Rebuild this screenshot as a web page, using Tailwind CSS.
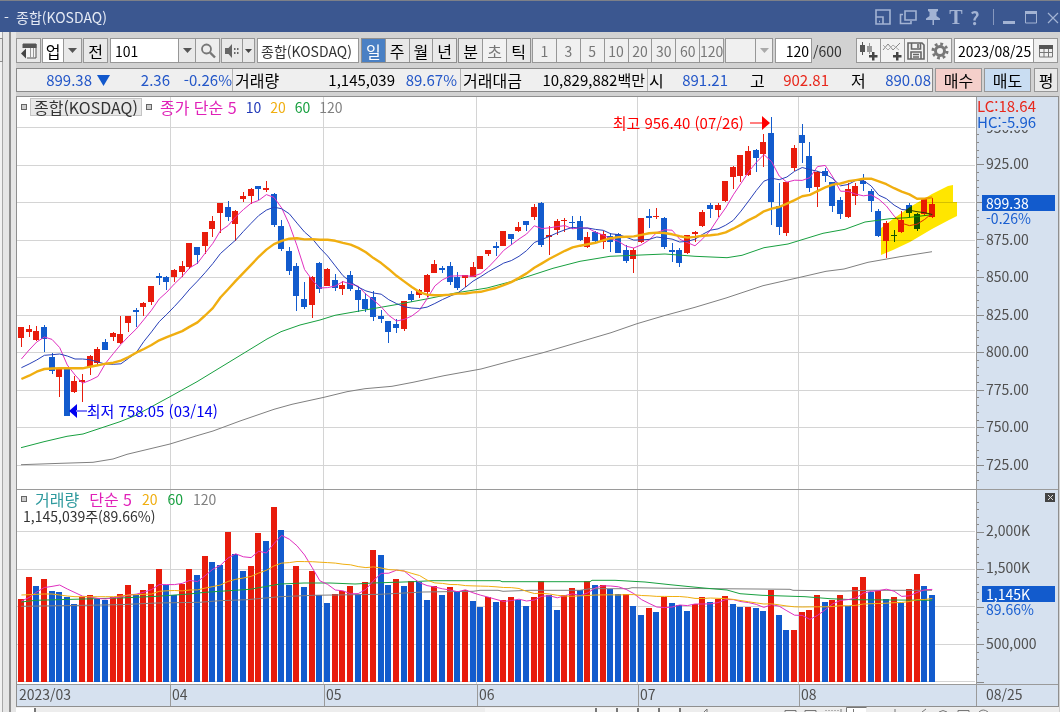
<!DOCTYPE html>
<html lang="ko">
<head>
<meta charset="utf-8">
<title>종합(KOSDAQ)</title>
<script src="https://cdn.jsdelivr.net/npm/@tailwindcss/browser@4"></script>
</head>
<body class="flex h-screen flex-col overflow-hidden bg-[#d2d2d2] font-['Noto_Sans_CJK_KR',sans-serif] text-sm leading-4 text-black">

<header class="flex h-8 shrink-0 items-center border-t border-[#7d8088] bg-[#3b5790] pl-1 text-[#e4e9f4]">
  <span class="w-3">-</span>
  <h1>종합(KOSDAQ)</h1>
  <div class="ml-auto flex items-center text-[#a3b3d3]">
    <button class="mr-2 w-4" aria-label="창 축소"><svg class="size-4" viewBox="0 0 16 16" fill="none" stroke="currentColor" stroke-width="1.6"><path d="M1 1h14v14H1z"/><path d="M1 8h7v7"/><path d="M4 12.500h1"/></svg></button>
    <button class="mr-2 w-4.5" aria-label="창 복제"><svg class="h-4 w-4.5" viewBox="0 0 18 16" fill="none" stroke="currentColor" stroke-width="1.6"><path d="M6 2h11v9H6z"/><path d="M4 5.500H1.500V14.500H12V12"/></svg></button>
    <button class="mr-2 w-4" aria-label="고정"><svg class="h-[18px] w-4" viewBox="0 0 16 18" fill="currentColor"><path d="M3 1h10v2l-1.500 1v4l3.500 2.500V12H9v5H7.500v-5H1v-1.500L4.500 8V4L3 3z"/></svg></button>
    <button class="mr-1.5 w-3.5 font-['Liberation_Serif',serif] text-xl leading-5 font-bold" aria-label="글꼴">T</button>
    <button class="mr-3 w-3 text-lg leading-5 font-bold" aria-label="도움말">?</button>
    <span class="mr-2 h-4 w-px bg-[#8698be]"></span>
    <button class="mr-2 w-3.5" aria-label="최소화"><svg class="h-4 w-3.5" viewBox="0 0 14 16" fill="currentColor"><path d="M1 12h12v3H1z"/></svg></button>
    <button class="mr-2 w-3.5" aria-label="최대화"><svg class="h-4 w-3.5" viewBox="0 0 14 16" fill="none" stroke="currentColor"><path d="M1.500 4v10h11V4"/><path d="M1 3.500h12" stroke-width="3"/></svg></button>
    <button class="w-3.5" aria-label="닫기"><svg class="h-4 w-3.5" viewBox="0 0 14 16" fill="none" stroke="currentColor" stroke-width="1.200"><path d="M2 4l10 10M12 4L2 14"/></svg></button>
  </div>
</header>

<div class="flex min-h-0 grow">
  <aside class="flex w-4 shrink-0 bg-[#e6e6e6]">
    <div class="w-[3px] border-r border-[#a8a8a8] bg-[#f2f2f2] pt-1.5"><div class="h-6 w-[3px] border-y border-r border-[#8c8c8c] bg-[#e8e8e8]"></div></div>
    <div class="mr-[5px] ml-auto w-0.5 bg-[#909090]"></div>
  </aside>

  <main class="flex min-w-0 grow flex-col pr-px">
    <div class="flex h-[31px] shrink-0 pt-1.5 pr-px">
      <button class="grid w-[25px] place-items-center border border-[#979797] bg-[#e9e9e9]" aria-label="화면 접기"><svg class="size-4" viewBox="0 0 16 16"><path d="M2 1h13v14H6" fill="#f4f4f4" stroke="#555"/><path d="M1.500 1h14v4h-14z" fill="#555"/><path d="M9.500 5v10M12.500 5v10" stroke="#999"/><path d="M0 10.500l5-5v10z" fill="#444"/></svg></button>
      <span class="ml-px grid w-[22px] place-items-center border border-[#979797] bg-white text-base">업</span>
      <button class="grid w-[18px] place-items-center border-y border-r border-[#979797] bg-[#e9e9e9]" aria-label="업종 목록"><svg class="h-[5px] w-[9px]" viewBox="0 0 9 5"><path d="M0 0h9L4.500 5z" fill="#555"/></svg></button>
      <button class="ml-px w-[25px] border border-[#979797] bg-[#e9e9e9] text-base leading-4">전</button>
      <input class="ml-0.5 w-[69px] border border-[#979797] bg-white pl-1" value="101" aria-label="종목코드">
      <button class="grid w-[17px] place-items-center border-y border-r border-[#979797] bg-[#e9e9e9]" aria-label="종목 목록"><svg class="h-[5px] w-[9px]" viewBox="0 0 9 5"><path d="M0 0h9L4.500 5z" fill="#555"/></svg></button>
      <button class="grid w-6 place-items-center border-y border-r border-[#979797] bg-[#ededed]" aria-label="검색"><svg class="size-4" viewBox="0 0 16 16" fill="none" stroke="#777"><circle cx="6.500" cy="6" r="4.500" stroke-width="1.800"/><path d="M10 9.500l5 5" stroke-width="2.400"/></svg></button>
      <button class="ml-px grid w-[22px] place-items-center border border-[#979797] bg-[#e9e9e9]" aria-label="소리"><svg class="size-4" viewBox="0 0 16 16" fill="#666"><path d="M1 5h3.500L8 1v14l-3.500-4H1z"/><path d="M10 5h1.500v2H10zM13 5h1.500v2H13zM10 9h1.500v2H10zM13 9h1.500v2H13z"/></svg></button>
      <button class="grid w-3 place-items-center border-y border-r border-[#979797] bg-[#e9e9e9]" aria-label="소리 옵션"><svg class="h-1 w-[7px]" viewBox="0 0 7 4"><path d="M0 0h7L3.500 4z" fill="#444"/></svg></button>
      <input class="ml-0.5 w-[102px] border border-[#979797] bg-white pl-[3px] text-[#333]" value="종합(KOSDAQ)" aria-label="종목명">

      <div class="ml-0.5 flex w-24 border border-[#8f8f8f] text-base leading-4">
        <button class="grow basis-0 bg-[#4a80c4] text-white">일</button>
        <button class="grow basis-0 border-l border-[#979797] bg-[#e9e9e9]">주</button>
        <button class="grow basis-0 border-l border-[#979797] bg-[#e9e9e9]">월</button>
        <button class="grow basis-0 border-l border-[#979797] bg-[#e9e9e9]">년</button>
      </div>
      <div class="ml-px flex w-[73px] border border-[#8f8f8f] text-base leading-4">
        <button class="grow basis-0 bg-[#e9e9e9]">분</button>
        <button class="grow basis-0 border-l border-[#979797] bg-[#f2f2f2] text-[#777]">초</button>
        <button class="grow basis-0 border-l border-[#979797] bg-[#e9e9e9]">틱</button>
      </div>
      <div class="ml-px flex w-48 border border-[#979797] bg-[#f0f0f0] text-[#777]">
        <button class="w-0 grow">1</button>
        <button class="w-0 grow border-l border-[#979797]">3</button>
        <button class="w-0 grow border-l border-[#979797]">5</button>
        <button class="w-0 grow border-l border-[#979797]">10</button>
        <button class="w-0 grow border-l border-[#979797]">20</button>
        <button class="w-0 grow border-l border-[#979797]">30</button>
        <button class="w-0 grow border-l border-[#979797]">60</button>
        <button class="flex w-0 grow justify-center border-l border-[#979797]"><span class="self-center">120</span></button>
      </div>
      <div class="relative ml-px flex w-12">
        <select class="w-full appearance-none border border-[#979797] bg-[#f0f0f0]" aria-label="분틱 간격" disabled><option></option></select>
        <span class="pointer-events-none absolute inset-y-0 right-0 grid w-[18px] place-items-center border border-[#979797]"><svg class="h-[5px] w-[9px]" viewBox="0 0 9 5"><path d="M0 0h9L4.500 5z" fill="#aaa"/></svg></span>
      </div>
      <input class="ml-0.5 w-[37px] border border-[#979797] bg-white pr-0.5 text-right" value="120" aria-label="표시 개수">
      <span class="ml-px self-center text-[#333]">/600</span>

      <div class="ml-auto flex w-24 border border-[#979797] bg-[#f2f2f2]">
        <button class="grid w-0 grow place-items-center border-r border-[#979797]" aria-label="캔들 추가"><svg class="size-5" viewBox="0 0 20 20"><path d="M2 4h5v7H2zM4 1h1v13H4z" fill="#555"/><path d="M9 5h5v6H9zM11 2h1v11h-1z" fill="#999"/><path d="M14 11h2.500v3h3v2.500h-3v3H14v-3h-3V14h3z" fill="#444"/></svg></button>
        <button class="grid w-0 grow place-items-center border-r border-[#979797]" aria-label="지표 추가"><svg class="size-5" viewBox="0 0 20 20" fill="none"><path d="M1 9l5-6 5 6 7-7" stroke="#888"/><path d="M1 4l5 5 5-5 6 5" stroke="#aaa"/><path d="M14 11h2.500v3h3v2.500h-3v3H14v-3h-3V14h3z" fill="#444"/></svg></button>
        <button class="grid w-0 grow place-items-center border-r border-[#979797]" aria-label="저장"><svg class="size-[18px]" viewBox="0 0 18 18" fill="none" stroke="#666" stroke-width="1.600"><path d="M1 1h14l2 2v14H1z"/><path d="M4.500 1v6h9V1M11 2v4M4 17v-7h10v7M6 12.500h6M6 15h6"/></svg></button>
        <button class="grid w-0 grow place-items-center" aria-label="설정"><svg class="size-[18px]" viewBox="-9 -9 18 18" fill="none" stroke="#777"><circle r="4.500" stroke-width="3"/><circle r="7" stroke-width="3" stroke-dasharray="2.750 2.750"/></svg></button>
      </div>
      <div class="ml-0.5 flex border border-[#979797] bg-white">
        <input class="w-[78px] pl-[3px]" value="2023/08/25" aria-label="날짜">
        <button class="grid w-6 place-items-center border-l border-[#979797] bg-[#f0f0f0]" aria-label="달력"><svg class="size-4" viewBox="0 0 16 16"><path d="M1.500 3h13v11h-13zM1.500 9.500h13M6 6v8M10.500 6v8" fill="none" stroke="#777"/><path d="M1 2h14v4H1z" fill="#555"/></svg></button>
      </div>
    </div>

    <div class="mt-[5px] flex h-6 shrink-0 pr-px">
      <dl class="flex grow border border-[#8a8a8a] bg-[#efefef] text-[15px] leading-4 text-[#2457c8] [&>dd]:flex [&>dd]:items-center [&>dd]:justify-end [&>dt]:flex [&>dt]:items-center [&>dt]:text-base [&>dt]:leading-4 [&>dt]:text-black">
        <dd class="w-[75px]">899.38</dd>
        <dd class="w-[18px]"><svg class="h-[11px] w-[13px]" viewBox="0 0 13 11" role="img" aria-label="하락"><path d="M0 0h13L6.500 11z" fill="#1258cc"/></svg></dd>
        <dd class="w-[60px]">2.36</dd>
        <dd class="w-[61px] grow border-r border-[#b4b4b4]">-0.26%</dd>
        <dt class="w-12 pl-0.5">거래량</dt>
        <dd class="w-[114px] text-black">1,145,039</dd>
        <dd class="w-[66px] border-r border-[#b4b4b4] pr-[3px]">89.67%</dd>
        <dt class="w-[62px] pl-0.5">거래대금</dt>
        <dd class="w-[125px] border-r border-[#b4b4b4] pr-0.5 text-black">10,829,882백만</dd>
        <dt class="w-5 pl-px">시</dt>
        <dd class="w-[60px]">891.21</dd>
        <dt class="w-10 pl-[22px]">고</dt>
        <dd class="w-[61px] text-[#e8281c]">902.81</dd>
        <dt class="w-[39px] pl-[22px]">저</dt>
        <dd class="w-16 pr-px">890.08</dd>
      </dl>
      <button class="ml-0.5 w-[47px] border border-[#979797] bg-[#f4cfca] text-base leading-4">매수</button>
      <button class="ml-0.5 w-[47px] border border-[#979797] bg-[#c9ddf2] text-base leading-4">매도</button>
      <button class="ml-[3px] w-6 border border-[#979797] bg-[#e9e9e9] text-base leading-4">평</button>
    </div>

    <section class="mt-1 grid min-h-0 grow grid-cols-[1fr_82px] grid-rows-[393fr_194fr_22px] border border-[#8f8f8f] bg-white" aria-label="차트">
      <div class="relative min-h-0 border-b border-[#9a9a9a]">
        <svg id="price" class="absolute size-full" viewBox="17 97 959 392" preserveAspectRatio="none" role="img" aria-label="일봉 차트"></svg>
        <div class="absolute top-px left-1 flex h-[18px] items-center leading-4">
          <span class="size-1.5 border border-[#666] bg-[#ccc]"></span>
          <span class="ml-[3px] border border-[#c4c4c4] bg-[#e8e8e8] px-[3px] text-base leading-4 text-[#333]">종합(KOSDAQ)</span>
          <span class="ml-1 size-1.5 border border-[#666] bg-[#ccc]"></span>
          <span class="ml-2 text-base leading-4 text-[#e020b8]">종가 단순 5</span>
          <span class="ml-[9px] text-[#2038b8]">10</span>
          <span class="ml-[9px] text-[#f0ae10]">20</span>
          <span class="ml-[9px] text-[#18a040]">60</span>
          <span class="ml-[9px] text-[#808080]">120</span>
        </div>
        <div class="absolute top-[4%] right-[21.5%] flex h-5 items-center gap-1.5 text-[15px] leading-5 text-[#ff0000]">
          <span>최고 956.40 (07/26)</span>
          <svg class="h-3.5 w-5" viewBox="0 0 20 14"><path d="M0 6.500h12v1H0zM12 0l8 7-8 7z" fill="#f00"/></svg>
        </div>
        <div class="absolute top-[77.600%] left-[5.400%] flex h-5 items-center text-[15px] leading-5 text-[#0000f0]">
          <svg class="h-3.5 w-[18px]" viewBox="0 0 18 14"><path d="M7 6.500h11v1H7zM8 0L0 7l8 7z" fill="#0000f0"/></svg>
          <span>최저 758.05 (03/14)</span>
        </div>
      </div>
      <div id="priceAxis" class="relative min-h-0 overflow-hidden border-b border-l border-[#9a9a9a] bg-[#d6e1ef] text-[#505050]">
        <div class="absolute top-px left-0 z-10 w-[74px] bg-[#d6e1ef] text-[15px] leading-4"><p class="text-[#e8281c]">LC:18.64</p><p class="text-[#1a5fd0]">HC:-5.96</p></div>
      </div>

      <div class="relative min-h-0">
        <svg id="volume" class="absolute size-full" viewBox="17 490 959 194" preserveAspectRatio="none" role="img" aria-label="거래량 차트"></svg>
        <div class="absolute top-px left-1 flex h-4 items-center leading-4">
          <span class="size-1.5 border border-[#666] bg-[#ccc]"></span>
          <span class="ml-2 text-base leading-4 text-[#2f9a9e]">거래량</span>
          <span class="ml-2.5 text-base leading-4 text-[#e020b8]">단순 5</span>
          <span class="ml-2.5 text-[#f0ae10]">20</span>
          <span class="ml-2.5 text-[#18a040]">60</span>
          <span class="ml-2.5 text-[#808080]">120</span>
        </div>
        <p class="absolute top-[18px] left-1.5 text-[#333]">1,145,039주(89.66%)</p>
      </div>
      <div id="volumeAxis" class="relative min-h-0 overflow-hidden border-l border-[#9a9a9a] bg-[#d6e1ef] text-[#505050]">
        <button class="absolute top-[3px] right-[3px] grid h-[9px] w-2.5 place-items-center bg-[#444]" aria-label="거래량 닫기"><svg class="h-[5px] w-[7px]" viewBox="0 0 7 5"><path d="M1 0l5 5M6 0L1 5" stroke="#ddd" fill="none"/></svg></button>
      </div>

      <div id="dates" class="grid grid-cols-[153fr_154fr_153fr_161fr_161fr_177fr] border-t border-[#9a9a9a] bg-[#d6e1ef] leading-[18px] text-[#505050]">
        <span class="pl-0.5">2023/03</span>
        <span class="border-l border-[#9a9a9a] pl-px">04</span>
        <span class="border-l border-[#9a9a9a] pl-px">05</span>
        <span class="border-l border-[#9a9a9a] pl-px">06</span>
        <span class="border-l border-[#9a9a9a] pl-px">07</span>
        <span class="border-l border-[#9a9a9a] pl-px">08</span>
      </div>
      <div class="border-t border-l border-[#9a9a9a] bg-[#d6e1ef] pl-[9px] leading-[18px] text-[#505050]">08/25</div>
    </section>

    <footer class="flex h-[5px] shrink-0 overflow-hidden bg-[#ededed]">
      <div class="mt-px w-5 border-r-2 border-[#777] bg-white"></div>
      <div class="mt-px ml-[449px] flex w-[196px] bg-[#f6f6f6]"><span class="w-28 border-r-2 border-[#777]"></span><span class="w-[21px] border-r-2 border-[#777]"></span><span class="w-[21px] border-r-2 border-[#777]"></span><span class="w-[21px] border-r-2 border-[#777]"></span><span class="w-[21px] border-r-2 border-[#777]"></span></div>
      <svg class="ml-auto h-[5px] w-[360px] shrink-0" viewBox="0 0 360 5" fill="none" stroke="#777"><path d="M5 5l3-3v3M86 5V3.500h11V5M106 5V3.500h11V5M127 3v1M130 3v1M133 3v1M136 3v1M139 3v1M142 2v3M196 2v3M223 5l4-3M240 5q4-3 8 0M259 5V3.500h11V5M280 5q4-4 9 0"/><path d="M147 1h20v4h-20z" fill="#fff" stroke="none"/><path d="M147.500 5V.5h20M154.500 2v3"/></svg>
    </footer>
  </main>
</div>

<script>
// Daily candles: direction, high, body top, body bottom, low (chart units, y grows downward)
const candles = `R 327 327 337.5 347|R 325 329 332 337|R 326 331 340 341|B 325 327 339 352|B 353 357 371 374|R 368 368 377 397|B 368 369 416 416|R 376 381 392 393|R 374 380 382 402|R 355 356 367 375|R 347 349 363 365|B 339 342 350 350|R 332 333 337 341|R 316 334 343 344|R 316 316 323 332|B 308 310 312 327|R 302 303 307 316|R 286 286 302 305|B 273 276 278 285|B 276 277 282 290|R 269 270 277 282|R 261 266 272 277|R 243 243 267 269|B 247 247 255 264|R 232 232 246 254|R 216 221 229 237|R 203 203 213 233|B 201 207 217 221|R 210 211 224 241|R 192 196 199 202|R 188 189 196 204|B 186 186 189 200|R 181 188 190 192|B 193 194 225 227|B 220 226 249 251|B 247 251 271 275|B 263 266 296 311|B 282 299 307 309|R 276 277 305 318|B 262 263 289 293|R 268 269 286 286|B 274 280 288 291|R 281 285 289 295|B 271 275 289 291|B 286 290 300 312|B 293 299 309 312|B 291 297 317 321|B 310 316 319 323|B 321 321 332 343|B 319 324 328 333|R 301 301 329 331|B 291 294 300 302|R 289 290 295 298|R 274 275 292 297|R 260 264 273 273|B 266 268 270 273|B 262 266 282 285|B 272 277 288 290|R 275 275 278 287|R 262 267 277 277|R 256 256 269 269|R 250 250 254 256|B 242 246 248 256|R 231 231 246 246|B 234 234 239 245|R 222 227 231 232|B 221 221 225 231|R 204 207 217 220|B 202 203 245 247|R 226 235 237 255|R 219 221 230 235|R 218 220 221 232|B 216 222 223 229|B 216 221 240 241|R 232 237 247 248|B 231 232 241 244|R 231 234 242 249|B 233 236 242 252|B 233 234 253 253|B 245 250 261 263|R 248 250 259 273|R 218 218 242 243|B 209 216 218 228|R 208 216 217 219|B 217 218 247 249|B 243 250 252 262|B 248 250 263 267|R 235 235 253 254|R 231 232 234 242|R 210 212 226 227|B 203 205 209 218|R 203 205 210 217|R 181 181 201 202|R 166 167 177 189|R 155 155 176 182|R 146 151 175 176|B 149 150 158 172|R 134 142 154 167|B 117 133 202 225|B 183 206 227 235|R 182 182 233 236|R 145 148 168 171|B 124 135 143 163|B 142 156 188 192|R 171 172 187 207|B 168 171 176 182|B 182 182 206 212|B 197 200 214 219|R 183 189 217 218|R 183 186 196 205|B 174 181 184 191|B 189 191 201 212|B 209 211 236 237|R 221 223 241 258|B 230 235 236 242|R 211 220 232 233|B 203 205 213 218|B 213 214 229 231|R 198 199 214 215|R 198 204 217 218`
  .split('|').map(r => { const p = r.split(' '); return [p[0], ...p.slice(1).map(Number)]; });
const vols = [599,577,586,579,591,592,597,604,597,595,599,600,597,594,585,595,590,584,569,585,595,584,569,575,556,562,565,532,554,571,566,533,541,507,530,585,566,587,571,595,603,594,591,586,594,582,550,555,585,579,586,581,582,600,586,595,587,591,590,601,607,597,602,600,597,600,606,597,581,595,610,595,588,590,581,585,585,589,594,594,606,615,608,612,597,603,605,611,604,597,602,599,596,604,607,607,608,611,590,615,630,630,612,610,595,602,600,595,606,587,577,592,591,599,597,603,589,574,586,595];
const x = i => 21.4 + 7.655 * i;
const RED = '#e81c0c', BLUE = '#125bcd';
const line = (pts, c, w = 1) => `<polyline points="${pts.map(p => p.map(v => v.toFixed(1)).join()).join(' ')}" fill="none" stroke="${c}" stroke-width="${w}" stroke-linejoin="round"/>`;
const rect = (a, b, w, h, c) => `<rect x="${a}" y="${b}" width="${w}" height="${h}" fill="${c}" shape-rendering="crispEdges"/>`;
// Simple moving average; "head" supplies the values before the first full window
const avg = (src, n, head) => src.map((_, i) => [x(i), i < head.length ? head[i] : src.slice(i - n + 1, i + 1).reduce((s, v) => s + v) / n]);
const months = [170, 323, 476, 637, 798];

const close = candles.map(c => c[0] === 'R' ? c[2] : c[3]);
let s = '';
for (let k = 0; k < 10; k++) s += rect(17, Math.round(127 + 37.5 * k), 958, 1, '#d4d4d4');
months.forEach(m => s += rect(m, 97, 1, 392, '#d4d4d4'));
candles.forEach(([d, h, t, b, l], i) => {
  const c = d === 'R' ? RED : BLUE, cx = Math.round(x(i) - 0.5);
  s += rect(cx, h, 1, Math.max(1, l - h), c) + rect(cx - 3, t, 6, Math.max(1, b - t), c);
});
s += line([[21,464.7],[61,463.3],[93,462.3],[113,459],[127,454.3],[170,444],[197,435.7],[213,431],[240,421],[274,409.3],[292,404.3],[324,397.3],[347,391.7],[365,388.7],[392,386.3],[413,382.3],[444,375.7],[481,369],[512,360.7],[543,352.7],[575,343.3],[611,332.7],[637,323.7],[664,315.7],[695,307.3],[726,298],[763,285.7],[800,277.3],[826,271.3],[844,269],[868,262.3],[900,256.7],[932,251.7]], '#808080');
s += line([[21,447.7],[44,441.7],[67,436.3],[83,434],[120,421.7],[135,415.7],[170,396.7],[197,381.7],[220,367.7],[260,343.3],[267,339],[281,331.7],[300,325],[320,320],[335,315.3],[365,310],[398,304.3],[428,298.7],[457,292.7],[487,288],[517,280],[553,268.3],[580,261.3],[600,258],[610,256.3],[641,255],[665,254],[695,256.3],[727,257.7],[742,255.3],[764,247.7],[788,244],[823,233.3],[845,229.3],[865,222],[890,218.7],[907,217.7],[932,214.7]], '#18a040');
s += line(avg(close, 5, [359, 350, 342, 337]), '#e030c0');
s += line(avg(close, 10, [367.7,364,360,355.3,354.7,354,356,359,359]), '#2840b8');
s += line(avg(close, 20, [379,375.7,371.7,369,368.5,368.3,368.3,368.3,368.3,366.7,365.3,363.7,362.7,360.7,357,352.7,349,345,340.3]), '#f0ae10', 2.4);
s += '<path d="M881 228L893 219 910 207 932 194 948 186 953 185V202L957 202V216L949 220 932 229 910 242 893 250 881 255z" fill="#ffe600" class="mix-blend-multiply"/>';
price.innerHTML = s;

s = '';
for (let k = 0; k < 5; k++) s += rect(17, Math.round(531 + 37.5 * k), 958, 1, '#d4d4d4');
months.forEach(m => s += rect(m, 490, 1, 194, '#d4d4d4'));
// A volume bar is red when volume did not fall against the previous day
vols.forEach((v, i) => s += rect(Math.round(x(i) - 0.5) - 3, v, 6, 682 - v, i === 0 || v <= vols[i - 1] ? RED : BLUE));
s += line([[21,606.3],[120,604.7],[157,603],[200,602.3],[220,600.7],[247,599.7],[280,596.7],[313,595.3],[380,594.3],[423,592],[473,591.3],[480,590.3],[498,590.3],[503,591.3],[530,590.3],[580,590.3],[590,588.7],[628,588.7],[632,587.7],[670,588.3],[790,589.3],[793,590.3],[845,591],[870,590.3],[932,590.3]], '#808080');
s += line([[21,602],[36,600.3],[120,598],[157,596.3],[189,594],[205,592.3],[235,590.3],[250,589.3],[280,584],[304,583],[330,583],[355,584],[373,583],[413,581.7],[432,580.7],[500,580.7],[502,581.7],[590,581.7],[592,580.3],[615,580.3],[645,582],[670,584.7],[690,586.7],[707,588.3],[727,590],[740,593.7],[762,595.3],[805,596.7],[830,598.7],[853,599.7],[932,600.3]], '#18a040');
s += line(avg(vols, 5, [601,597.5,592,587.5]), '#e030c0');
s += line(avg(vols, 20, [595,594.7,594.3,594,594,595,596,596.7,596.7,596.7,596.7,596.7,596.7,596,595,594.7,594.3,594,591.3]), '#f0ae10');
volume.innerHTML = s;

// Axis ticks and labels, placed as a share of the pane height
function axis(el, top, height, first, count, majors, labels) {
  let h = '';
  for (let k = 0; k < count; k++) {
    const major = k % 5 === majors;
    h += `<i class="absolute left-0 h-px bg-[#888] ${major ? 'w-[7px]' : 'w-0.5'}" style="top:${(first + 7.5 * k - top) / height * 100}%"></i>`;
  }
  labels.forEach(([y, t]) => h += `<span class="absolute left-[9px] -translate-y-1/2" style="top:${(y - top) / height * 100}%">${t}</span>`);
  el.insertAdjacentHTML('beforeend', h);
}
axis(priceAxis, 97, 392, 134.5, 47, 4, [[127,'950.00'],[163.5,'925.00'],[238.5,'875.00'],[276,'850.00'],[313.5,'825.00'],[351,'800.00'],[388.5,'775.00'],[426,'750.00'],[463.5,'725.00']]);
axis(volumeAxis, 490, 194, 501.5, 25, 4, [[530,'2,000K'],[567.5,'1,500K'],[642.5,'500,000']]);
const tag = (el, top, value, pct) => el.insertAdjacentHTML('beforeend', `<div class="absolute left-[5px] w-[73px]" style="top:${top}%"><p class="h-4 bg-[#125bcd] pl-1 leading-4 text-white">${value}</p><p class="h-3.5 pl-1 leading-[14px] text-[#1a5fd0]">${pct}</p></div>`);
tag(priceAxis, 25, '899.38', '-0.26%');
tag(volumeAxis, 49.5, '1,145K', '89.66%');
</script>
</body>
</html>
